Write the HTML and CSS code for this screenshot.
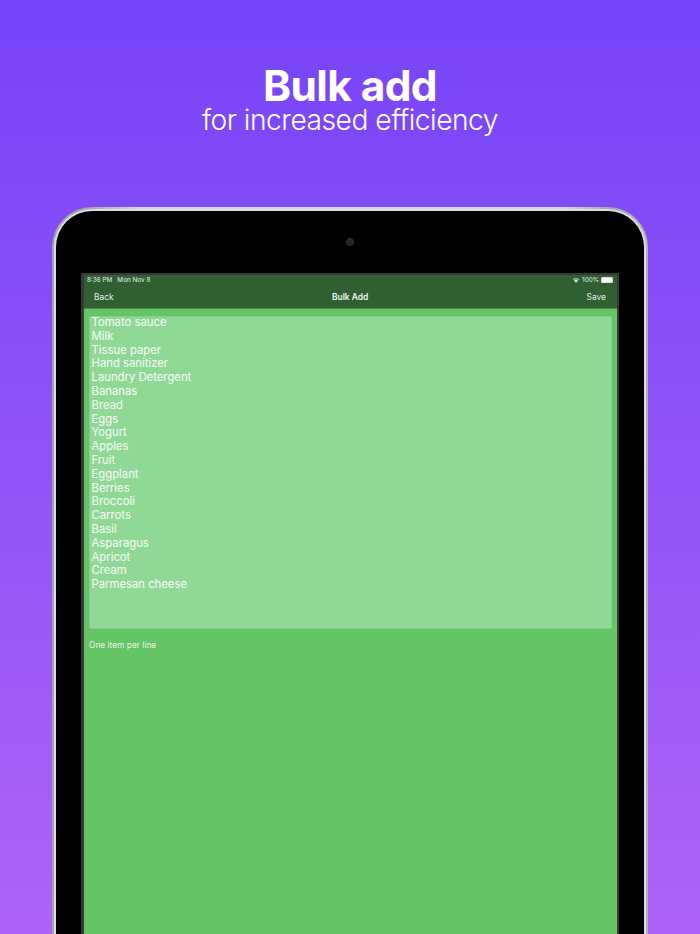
FILE: index.html
```html
<!DOCTYPE html>
<html lang="en">
<head>
<meta charset="utf-8">
<title>Bulk add</title>
<link rel="stylesheet" href="styles.css">
</head>
<body>
<main class="page">
  <header class="hero">
    <h1 class="hero-title">Bulk add</h1>
    <p class="hero-sub">for increased efficiency</p>
  </header>
  <section class="device">
    <div class="bezel">
      <div class="camera-row"><span class="camera"></span></div>
      <div class="screen">
        <div class="topbar">
          <div class="status">
            <span class="status-left"><span>8:36 PM</span><span>Mon Nov 8</span></span>
            <span class="status-right">
              <svg class="wifi" viewBox="0 0 16 12" aria-hidden="true"><path d="M8 11.5 5.6 8.9a3.4 3.4 0 0 1 4.8 0Z" fill="#fff"/><path d="M3.9 7.2a5.8 5.8 0 0 1 8.2 0l-1 1.1a4.4 4.4 0 0 0-6.2 0Z" fill="#fff"/><path d="M1.8 5a8.8 8.8 0 0 1 12.4 0l-1.1 1.1a7.3 7.3 0 0 0-10.2 0Z" fill="#fff"/></svg>
              <span>100%</span>
              <span class="battery"><span class="battery-fill"></span></span>
            </span>
          </div>
          <nav class="navbar">
            <span class="nav-btn">Back</span>
            <span class="nav-title">Bulk Add</span>
            <span class="nav-btn">Save</span>
          </nav>
        </div>
        <div class="content">
          <div class="textarea">
            <div class="items">
              <div>Tomato sauce</div>
              <div>Milk</div>
              <div>Tissue paper</div>
              <div>Hand sanitizer</div>
              <div>Laundry Detergent</div>
              <div>Bananas</div>
              <div>Bread</div>
              <div>Eggs</div>
              <div>Yogurt</div>
              <div>Apples</div>
              <div>Fruit</div>
              <div>Eggplant</div>
              <div>Berries</div>
              <div>Broccoli</div>
              <div>Carrots</div>
              <div>Basil</div>
              <div>Asparagus</div>
              <div>Apricot</div>
              <div>Cream</div>
              <div>Parmesan cheese</div>
            </div>
          </div>
          <p class="hint">One item per line</p>
        </div>
      </div>
    </div>
  </section>
</main>
</body>
</html>
```
FILE: styles.css
```css
* { box-sizing: border-box; }
html, body { margin: 0; padding: 0; height: 100%; }
body { overflow: hidden; font-family: Inter, "Liberation Sans", sans-serif; }
.page {
  width: 700px;
  height: 934px;
  overflow: hidden;
  display: flex;
  flex-direction: column;
  align-items: center;
  background: linear-gradient(180deg, #7544f8 0%, #ad63f6 100%);
  color: #fff;
}
.hero { padding-top: 64px; height: 207px; text-align: center; flex: none; }
.hero-title { margin: 0; font-size: 42.5px; line-height: 43px; font-weight: 700; letter-spacing: -0.65px; }
.hero-sub { margin: 0; font-size: 28.2px; line-height: 27px; font-weight: 300; letter-spacing: -0.5px; }
.device {
  flex: 1;
  width: 596px;
  padding: 4px 4px 0;
  border-radius: 40px 40px 0 0;
  background: linear-gradient(90deg, #a4a4a8 0%, #a4a4a8 6%, #d8d8dc 14%, #d8d8dc 86%, #a4a4a8 94%, #b4b4b8 100%);
}
.bezel {
  height: 100%;
  background: #000;
  border-radius: 36px 36px 0 0;
  box-shadow: 0 0 0 2px #dcdce2;
  padding: 0 25px;
  display: flex;
  flex-direction: column;
}
.camera-row { height: 62px; flex: none; display: flex; justify-content: center; padding-top: 27px; }
.camera { width: 8px; height: 8px; border-radius: 50%; background: #23252c; border: 1px solid #333; }
.screen {
  flex: 1;
  display: flex;
  flex-direction: column;
  background: #64c466;
  border: solid #38383a;
  border-width: 2px 2px 0 3px;
}
.topbar { background: #305f32; border-bottom: 1px solid #4c8a4e; flex: none; height: 34px; }
.status {
  height: 10px;
  display: flex;
  justify-content: space-between;
  align-items: center;
  padding: 0 4px 0 3px;
  font-size: 6.4px;
  color: #e6eee6;
}
.status-left { display: flex; gap: 5px; }
.status-right { display: flex; align-items: center; gap: 2px; }
.wifi { width: 8px; height: 6px; }
.battery { width: 12px; height: 6px; padding: 1px; border-radius: 1.5px; background: #dfe8df; display: block; }
.battery-fill { display: block; height: 100%; background: #fff; border-radius: 1px; }
.navbar {
  height: 23px;
  display: flex;
  justify-content: space-between;
  align-items: center;
  padding: 0 11px 0 10px;
  font-size: 8.4px;
  color: #e3ebe3;
}
.nav-title { font-weight: 600; color: #f0f5f0; }
.content { flex: 1; padding: 7px 5px 0; }
.textarea {
  height: 313px;
  background: #90d896;
  border-radius: 2px;
  border: 1px solid #83cf88;
  padding: 0 1.5px;
  font-size: 11.3px;
  line-height: 13.79px;
  color: #f6fcf6;
}
.items { transform: translateY(-1px); }
.hint { margin: 11px 0 0; font-size: 8.4px; line-height: 11px; color: #e6f5e6; }
```
